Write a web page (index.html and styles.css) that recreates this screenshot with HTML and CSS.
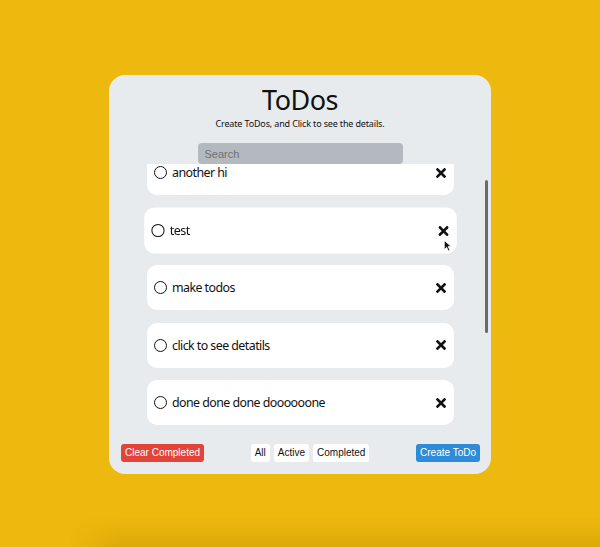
FILE: index.html
```html
<!DOCTYPE html>
<html lang="en">
<head>
<meta charset="utf-8">
<title>ToDos</title>
<link rel="stylesheet" href="styles.css">
</head>
<body>
<div class="floor-shadow"></div>
<main class="card">
  <h1 class="title">ToDos</h1>
  <p class="subtitle">Create ToDos, and Click to see the details.</p>
  <input class="search" type="text" placeholder="Search">
  <div class="list">
    <ul class="items">
      <li class="item">
        <span class="check"></span><span class="label">another hi</span>
        <svg class="del" viewBox="0 0 10 10"><path d="M1.5 1.5L8.5 8.5M8.5 1.5L1.5 8.5"/></svg>
      </li>
      <li class="item hovered">
        <span class="check"></span><span class="label">test</span>
        <svg class="del" viewBox="0 0 10 10"><path d="M1.5 1.5L8.5 8.5M8.5 1.5L1.5 8.5"/></svg>
        <svg class="cursor" viewBox="0 0 12 16"><path d="M1 1L1 13L4 10L6.5 15L8.5 14L6 9L10 9Z"/></svg>
      </li>
      <li class="item">
        <span class="check"></span><span class="label">make todos</span>
        <svg class="del" viewBox="0 0 10 10"><path d="M1.5 1.5L8.5 8.5M8.5 1.5L1.5 8.5"/></svg>
      </li>
      <li class="item">
        <span class="check"></span><span class="label">click to see detatils</span>
        <svg class="del" viewBox="0 0 10 10"><path d="M1.5 1.5L8.5 8.5M8.5 1.5L1.5 8.5"/></svg>
      </li>
      <li class="item">
        <span class="check"></span><span class="label">done done done doooooone</span>
        <svg class="del" viewBox="0 0 10 10"><path d="M1.5 1.5L8.5 8.5M8.5 1.5L1.5 8.5"/></svg>
      </li>
    </ul>
  </div>
  <div class="scroll-thumb"></div>
  <footer class="bar">
    <button class="btn btn-red">Clear Completed</button>
    <div class="filters">
      <button class="btn btn-white">All</button>
      <button class="btn btn-white">Active</button>
      <button class="btn btn-white">Completed</button>
    </div>
    <button class="btn btn-blue">Create ToDo</button>
  </footer>
</main>
</body>
</html>
```
FILE: styles.css
```css
* { box-sizing: border-box; }
html, body {
  margin: 0;
  padding: 0;
  height: 547px;
  overflow: hidden;
}
body {
  background: #edb90e;
  font-family: "Noto Sans", sans-serif;
  color: #111;
  position: relative;
}
.floor-shadow {
  position: absolute;
  left: 70px;
  right: 0;
  bottom: 0;
  height: 30px;
  background: linear-gradient(to bottom, rgba(190, 140, 0, 0) 0%, rgba(190, 140, 0, 0.35) 100%);
  -webkit-mask-image: linear-gradient(to right, transparent 0, #000 50px);
  mask-image: linear-gradient(to right, transparent 0, #000 50px);
}
.card {
  position: relative;
  width: 382px;
  height: 399px;
  margin: 75px auto 0;
  background: #e8ebee;
  border-radius: 16px;
  display: flex;
  flex-direction: column;
  align-items: center;
  padding: 8px 0 12px;
}
.title {
  margin: 0;
  font-weight: 400;
  font-size: 27px;
  line-height: 34px;
  height: 34px;
  letter-spacing: -0.5px;
}
.subtitle {
  margin: 0;
  font-size: 9px;
  line-height: 14px;
  height: 14px;
  letter-spacing: -0.15px;
}
.search {
  margin-top: 12px;
  width: 205px;
  height: 21px;
  border: none;
  border-radius: 4px;
  background: #b4b8bf;
  padding: 0 7px;
  font-family: "Liberation Sans", Arial, sans-serif;
  font-size: 11px;
  color: #333;
  outline: none;
}
.search::placeholder { color: #6e727a; }
.list {
  width: 100%;
  height: 268px;
  overflow: hidden;
  flex: none;
}
.items {
  list-style: none;
  margin: -14px 0 0;
  padding: 0 37px 0 38px;
  display: flex;
  flex-direction: column;
  gap: 12.5px;
}
.item {
  position: relative;
  height: 45px;
  background: #fff;
  border-radius: 10px;
  display: flex;
  align-items: center;
  padding: 0 8px 0 7px;
  font-size: 12.4px;
}
.item.hovered { transform: scale(1.018); }
.check {
  width: 13px;
  height: 13px;
  border: 1.5px solid #111;
  border-radius: 50%;
  flex: none;
}
.label {
  margin-left: 5px;
  flex: 1;
  letter-spacing: -0.55px;
}
.del {
  width: 10px;
  height: 10px;
  flex: none;
}
.del path {
  stroke: #111;
  stroke-width: 2.6;
  stroke-linecap: square;
  fill: none;
}
.cursor {
  position: absolute;
  left: 294px;
  top: 31px;
  width: 9px;
  height: 13px;
}
.cursor path {
  fill: #111;
  stroke: #fff;
  stroke-width: 1;
}
.scroll-thumb {
  position: absolute;
  right: 3px;
  top: 105px;
  width: 3px;
  height: 153px;
  border-radius: 2px;
  background: #6b6b6b;
}
.bar {
  margin-top: 12px;
  width: 100%;
  padding: 0 11px 0 12px;
  display: flex;
  justify-content: space-between;
  align-items: center;
}
.filters {
  display: flex;
  gap: 4px;
}
.btn {
  height: 18px;
  border: none;
  border-radius: 3px;
  padding: 0 4px;
  font-family: "Liberation Sans", Arial, sans-serif;
  font-size: 10px;
  line-height: 18px;
  cursor: pointer;
}
.btn-red { background: #e2443a; color: #fff; }
.btn-blue { background: #2e8bd7; color: #fff; }
.btn-white { background: #fff; color: #111; }
```
